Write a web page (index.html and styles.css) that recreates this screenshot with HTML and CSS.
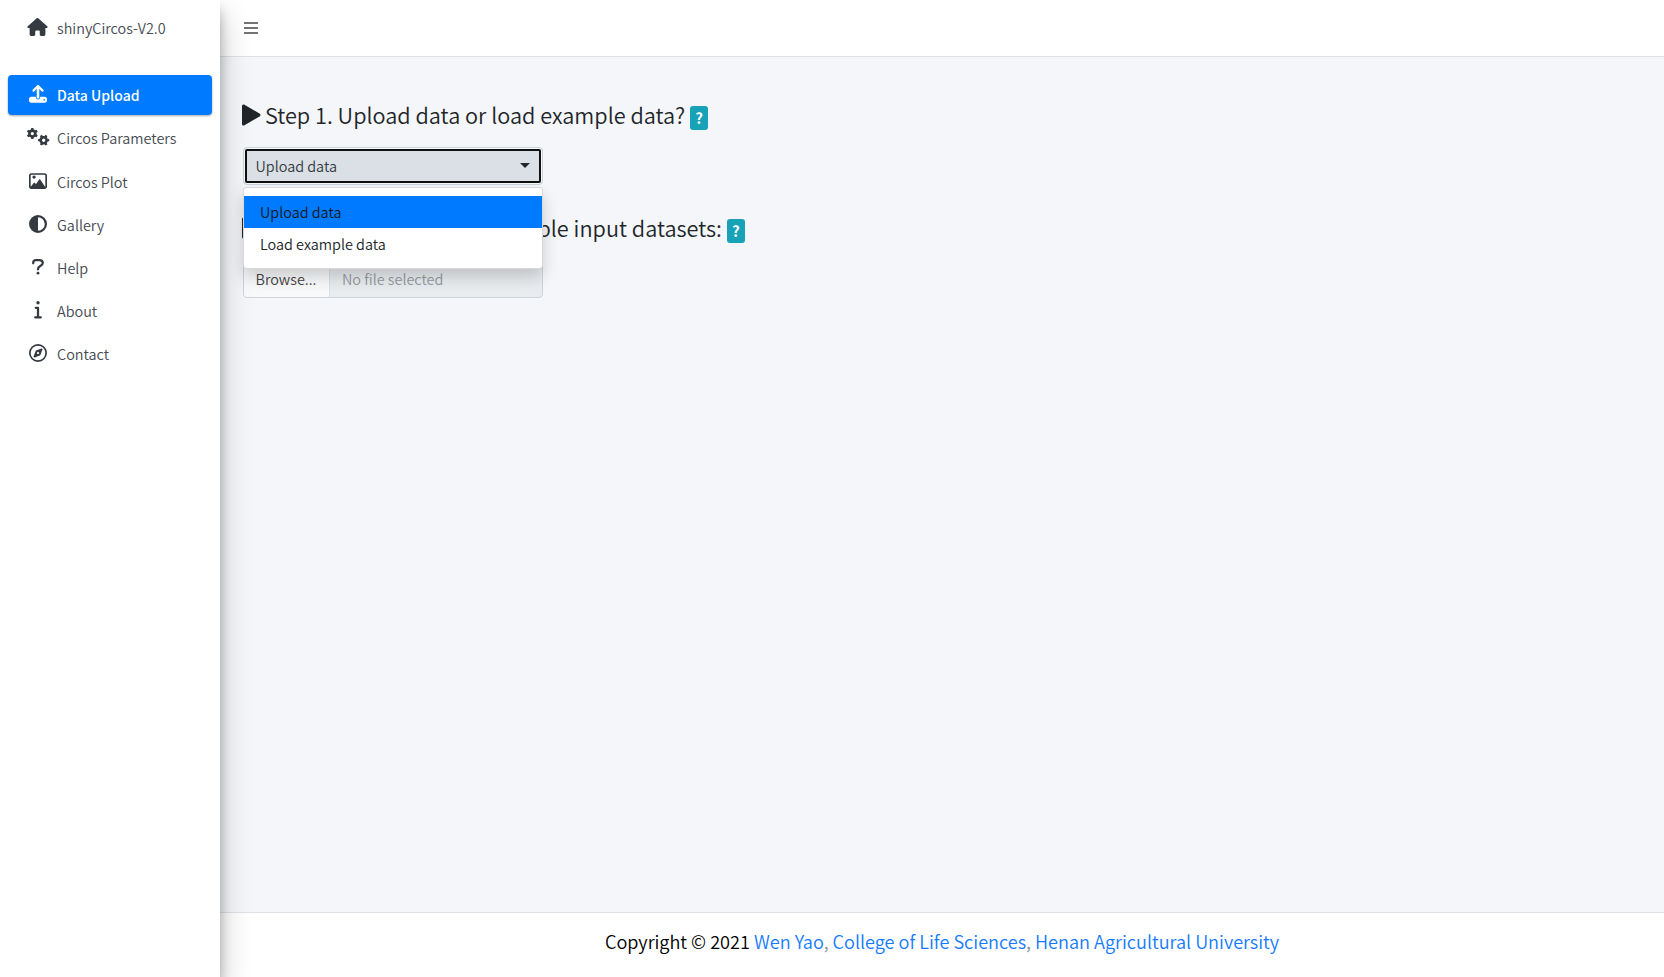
FILE: index.html
```html
<!DOCTYPE html>
<html lang="en">
<head>
<meta charset="utf-8">
<title>shinyCircos-V2.0</title>
<link rel="stylesheet" href="styles.css">
</head>
<body>
<div class="layout">
  <aside class="sidebar">
    <a class="brand">
      <svg class="icon home" viewBox="0 0 576 512"><path d="M575.8 255.5c0 18-15 32.1-32 32.1h-32l.7 160.2c0 2.7-.2 5.4-.5 8.1V472c0 22.1-17.9 40-40 40H392c-22.1 0-40-17.9-40-40V384c0-17.700-14.300-32-32-32H256c-17.700 0-32 14.300-32 32v88c0 22.100-17.900 40-40 40H104c-22.100 0-40-17.900-40-40V287.600H32c-18 0-32-14-32-32.100c0-9 3-17 10-24L266.400 8c7-7 15-8 22-8s15 2 21 7L564.800 231.500c8 7 12 15 11 24z"/></svg>
      <span>shinyCircos-V2.0</span>
    </a>
    <nav class="menu">
      <a class="item active">
        <svg class="icon" viewBox="0 0 512 512"><path fill-rule="evenodd" d="M292 109.300V352c0 17.700-16.300 32-36 32s-36-14.300-36-32V109.300l-69.400 73.400c-12.500 12.500-32.800 12.500-45.300 0s-12.500-32.800 0-45.300l128-128c12.500-12.500 32.800-12.500 45.300 0l128 128c12.500 12.500 12.500 32.800 0 45.300s-32.800 12.500-45.300 0L292 109.300zM64 336H192c0 45.300 28.700 74 64 74s64-28.700 64-74H448c35.300 0 64 28.700 64 64v40c0 35.300-28.700 64-64 64H64c-35.300 0-64-28.700-64-64V400c0-35.300 28.700-64 64-64zM432 444a24 24 0 1 0 0-48 24 24 0 1 0 0 48z"/></svg>
        <span>Data Upload</span>
      </a>
      <a class="item">
        <svg class="icon gears" viewBox="0 0 640 512"><defs><g id="gear"><circle r="86" fill="none" stroke="currentColor" stroke-width="76"/><path id="tooth" d="M-40-104L-32-162H32L40-104ZM-40 104L-32 162H32L40 104Z"/><use href="#tooth" transform="rotate(60)"/><use href="#tooth" transform="rotate(120)"/></g></defs><use href="#gear" transform="translate(155 155)"/><use href="#gear" transform="translate(485 350) rotate(30)"/></svg>
        <span>Circos Parameters</span>
      </a>
      <a class="item">
        <svg class="icon" viewBox="0 0 512 512"><path fill-rule="evenodd" d="M448 32H64C28.700 32 0 60.700 0 96v320c0 35.300 28.700 64 64 64h384c35.300 0 64-28.700 64-64V96c0-35.300-28.700-64-64-64zM464 416c0 3-.8 6-2.300 8.500L324 218c-4.500-6.600-11.900-10.500-19.800-10.500s-15.400 3.900-19.800 10.500l-87 127.600-26.500-33.100C166.200 306.800 159.400 303.500 152 303.500s-14.200 3.300-18.700 9.100L48 421V96c0-8.800 7.200-16 16-16h384c8.800 0 16 7.200 16 16zM144 192a48 48 0 1 0 0-96 48 48 0 1 0 0 96z"/></svg>
        <span>Circos Plot</span>
      </a>
      <a class="item">
        <svg class="icon" viewBox="0 0 512 512"><path fill-rule="evenodd" d="M256 0a256 256 0 1 0 0 512A256 256 0 0 0 256 0zM256 64a192 192 0 0 1 0 384z"/></svg>
        <span>Gallery</span>
      </a>
      <a class="item">
        <svg class="icon" viewBox="0 0 512 512"><path class="line" d="M120 150V130Q124 60 196 60H300Q392 60 392 140C392 236 256 220 256 310V326"/><circle cx="256" cy="432" r="40"/></svg>
        <span>Help</span>
      </a>
      <a class="item">
        <svg class="icon" viewBox="0 0 512 512"><circle cx="256" cy="48" r="48"/><path class="line" d="M192 192H256V464M176 464H336"/></svg>
        <span>About</span>
      </a>
      <a class="item">
        <svg class="icon" viewBox="0 0 512 512"><path fill-rule="evenodd" d="M256 0a256 256 0 1 0 0 512A256 256 0 0 0 256 0zM256 48a208 208 0 1 1 0 416A208 208 0 0 1 256 48zM306.700 325.100L162.400 380.600c-19.400 7.500-38.500-11.600-31-31l55.500-144.300c3.300-8.500 9.900-15.100 18.400-18.400l144.300-55.500c19.400-7.500 38.500 11.600 31 31L325.100 306.700c-3.200 8.500-9.900 15.100-18.400 18.400zM256 288a32 32 0 1 0 0-64 32 32 0 1 0 0 64z"/></svg>
        <span>Contact</span>
      </a>
    </nav>
  </aside>
  <div class="page">
    <header class="topbar">
      <svg class="burger" viewBox="0 0 14 12"><path d="M0 1H14M0 6H14M0 11H14"/></svg>
    </header>
    <main class="content">
      <h2 class="step"><svg class="play" viewBox="0 0 19 22"><path d="M0 2Q0 0 2 .5L17.500 9.500Q19.500 11 17.500 12.500L2 21.500Q0 22 0 20Z"/></svg><span>Step 1. Upload data or load example data?</span><b class="help">?</b></h2>
      <div class="picker">
        <div class="select"><span>Upload data</span><i class="caret"></i></div>
        <div class="dropdown">
          <div class="option selected">Upload data</div>
          <div class="option">Load example data</div>
        </div>
      </div>
      <h2 class="step second"><svg class="play" viewBox="0 0 19 22"><path d="M0 2Q0 0 2 .5L17.500 9.500Q19.500 11 17.500 12.500L2 21.500Q0 22 0 20Z"/></svg><span>Step 2. Upload one or multiple input datasets:</span><b class="help">?</b></h2>
      <div class="file"><div class="browse">Browse...</div><div class="filename">No file selected</div></div>
    </main>
    <footer class="footer"><span>Copyright © 2021 <a>Wen Yao</a><i>,</i> <a>College of Life Sciences</a><i>,</i> <a>Henan Agricultural University</a></span></footer>
  </div>
</div>
</body>
</html>
```
FILE: styles.css
```css
* { box-sizing: border-box; }
body { margin: 0; font-family: "Noto Sans CJK SC", "Noto Sans", sans-serif; font-size: 14.42px; font-weight: 350; color: #212529; line-height: 24px; }
.layout { display: flex; height: 977px; overflow: hidden; background: #f4f6f9; }
.sidebar { position: relative; z-index: 2; width: 220px; background: #fff; color: #343a40; box-shadow: 0 14px 28px rgba(0,0,0,.25), 0 10px 10px rgba(0,0,0,.22); }
.brand { display: flex; align-items: center; height: 56px; padding-left: 27px; gap: 9px; }
.brand span, .item span { white-space: nowrap; color: #454b51; }
.icon { width: 18px; height: 18px; margin: 0 1px 2px 2px; fill: currentColor; overflow: visible; }
.icon.home { width: 21px; margin: 0 0 2px; }
.icon.gears { width: 22px; margin: 0 -1px 2px 0; }
.line { fill: none; stroke: currentColor; stroke-width: 64; stroke-linecap: round; stroke-linejoin: round; }
.menu { display: flex; flex-direction: column; gap: 3.2px; padding: 19px 8px 0; }
.item { display: flex; align-items: center; height: 40px; padding-left: 19px; gap: 9px; border-radius: 4px; }
.item:nth-child(3) { position: relative; top: .6px; }
.item.active { background: #007bff; color: #fff; box-shadow: 0 1px 3px rgba(0,0,0,.12), 0 1px 2px rgba(0,0,0,.24); }
.item.active span { color: #fff; font-size: 14px; font-weight: 500; }
.page { flex: 1; display: flex; flex-direction: column; }
.topbar { display: flex; align-items: center; height: 57px; padding-left: 24px; background: #fff; border-bottom: 1px solid #dee2e6; }
.burger { width: 14px; height: 12px; stroke: #747474; stroke-width: 2; }
.content { flex: 1; padding: 42px 23px 0; }
.step { display: flex; align-items: center; height: 32px; margin: 0 0 0 -1px; font-size: 21.7px; font-weight: 350; line-height: 32px; white-space: nowrap; }
.play { width: 19px; height: 22px; margin-right: 4px; fill: #212529; }
.help { width: 18px; height: 24px; margin: 5px 0 0 5px; border-radius: 3px; background: #17a2b8; color: #fff; font-size: 15px; font-weight: 700; line-height: 23px; text-align: center; }
.picker { position: relative; width: 300px; height: 38px; margin: 16px 0 0; }
.select { display: flex; align-items: center; justify-content: space-between; height: 38px; padding: 0 12px 0 11.5px; background: #dae0e5; border: 1px solid #cbd3da; border-radius: 4px; box-shadow: inset 0 0 0 1px #f8f9fa; outline: 2px solid #101010; outline-offset: -4px; color: #343a40; }
.caret { margin-top: -2px; border: 5px solid transparent; border-top-color: #212529; border-bottom: 0; }
.dropdown { position: absolute; z-index: 3; top: 40px; left: 0; width: 300px; padding: 8px 0; background: #fff; border: 1px solid rgba(0,0,0,.15); border-radius: 4px; box-shadow: 0 8px 16px rgba(0,0,0,.175); }
.option { height: 32px; padding-left: 16px; line-height: 32px; }
.option.selected { background: #007bff; color: #16181b; }
.second { margin-top: 27px; }
.file { display: flex; width: 300px; height: 38px; margin-top: 16px; border: 1px solid #ced4da; border-radius: 4px; overflow: hidden; background: #e9ecef; line-height: 36px; }
.browse { width: 86px; padding-left: 11.5px; background: #f8f9fa; border-right: 1px solid #ddd; color: #444; }
.filename { padding-left: 12px; color: #939ba2; }
.footer { display: flex; justify-content: center; height: 65px; padding-top: 14px; background: #fff; border-top: 1px solid #dee2e6; color: #000; font-size: 18.12px; line-height: 28px; white-space: nowrap; }
.footer a { color: #147bff; }
.footer i { font-style: normal; color: #869099; }
```
